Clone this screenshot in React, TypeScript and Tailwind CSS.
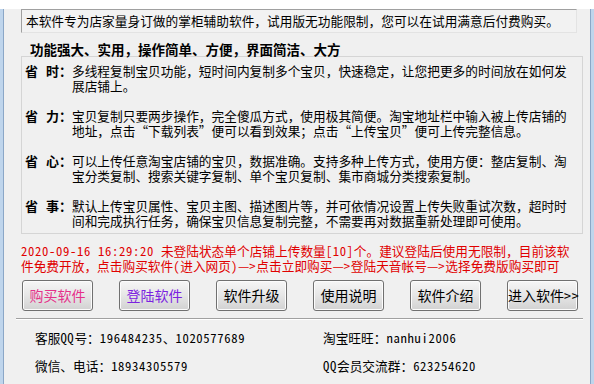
import React from "react";

const FONT = { fontFamily: '"Noto Sans CJK SC", "Noto Sans", sans-serif' };

type Feature = { label: string; lines: string[] };

const FEATURES: Feature[] = [
  {
    label: "时",
    lines: [
      "多线程复制宝贝功能，短时间内复制多个宝贝，快速稳定，让您把更多的时间放在如何发",
      "展店铺上。",
    ],
  },
  {
    label: "力",
    lines: [
      "宝贝复制只要两步操作，完全傻瓜方式，使用极其简便。淘宝地址栏中输入被上传店铺的",
      "地址，点击“下载列表”便可以看到效果；点击“上传宝贝”便可上传完整信息。",
    ],
  },
  {
    label: "心",
    lines: [
      "可以上传任意淘宝店铺的宝贝，数据准确。支持多种上传方式，使用方便：整店复制、淘",
      "宝分类复制、搜索关键字复制、单个宝贝复制、集市商城分类搜索复制。",
    ],
  },
  {
    label: "事",
    lines: [
      "默认上传宝贝属性、宝贝主图、描述图片等，并可依情况设置上传失败重试次数，超时时",
      "间和完成执行任务，确保宝贝信息复制完整，不需要再对数据重新处理即可使用。",
    ],
  },
];

const BUTTONS = [
  { text: "购买软件", color: "text-[#e5318a]" },
  { text: "登陆软件", color: "text-[#7b22e0]" },
  { text: "软件升级", color: "text-black" },
  { text: "使用说明", color: "text-black" },
  { text: "软件介绍", color: "text-black" },
  { text: "进入软件>>", color: "text-black" },
];

// half-width ascii runs, like the old SimSun look
function Mixed({ text }: { text: string }) {
  const parts = text.split(/([\x20-\x7e]+)/);
  return (
    <>
      {parts.map((p, i) =>
        /^[\x20-\x7e]+$/.test(p) ? (
          <span key={i} className="[font-feature-settings:'hwid'] tracking-[0.65px]">
            {p}
          </span>
        ) : (
          <React.Fragment key={i}>{p}</React.Fragment>
        )
      )}
    </>
  );
}

function FeatureRow({ f }: { f: Feature }) {
  return (
    <div className="flex">
      <div className="flex w-[47px] shrink-0 text-[13px] font-bold leading-[14.5px]">
        <span className="w-[21px]">省</span>
        <span>{f.label}：</span>
      </div>
      <div className="text-[12.7px] leading-[14.5px]">
        {f.lines.map((l, i) => (
          <div key={i} className="whitespace-nowrap">
            {l}
          </div>
        ))}
      </div>
    </div>
  );
}

export default function App() {
  return (
    <div
      className="w-[594px] h-[384px] bg-[#bfd5ec] pl-[3px] pr-[3px] pb-[2px] text-black"
      style={FONT}
    >
      <div className="h-full border-l border-r border-b border-[#8ba7c7] bg-[#f0f0f0] pl-[17px]">
        {/* notice box */}
        <div className="mt-[9px] flex h-[24px] w-[556px] items-center border border-t-[#a0a0a0] border-l-[#a0a0a0] border-b-[#e3e3e3] border-r-[#e3e3e3] bg-[#f2f2f2] pl-[4px] text-[12.7px] whitespace-nowrap">
          本软件专为店家量身订做的掌柜辅助软件，试用版无功能限制，您可以在试用满意后付费购买。
        </div>

        {/* features */}
        <div className="mt-[9px] pl-[9px] text-[13.5px] font-bold leading-[14px] whitespace-nowrap">
          功能强大、实用，操作简单、方便，界面简洁、大方
        </div>
        <div className="h-[178px] w-[562px] border border-[#d5d5d5] pl-[3px] pt-[7px] flex flex-col gap-[16px]">
          {FEATURES.map((f) => (
            <FeatureRow key={f.label} f={f} />
          ))}
        </div>

        {/* status */}
        <div className="mt-[10px] text-[12.7px] leading-[14.5px] text-[#e00000] whitespace-nowrap">
          <div>
            <Mixed text="2020-09-16 16:29:20 " />
            未登陆状态单个店铺上传数量
            <Mixed text="[10]" />
            个。建议登陆后使用无限制，目前该软
          </div>
          <div>
            件免费开放，点击购买软件<Mixed text="(" />进入网页<Mixed text=")" />—<Mixed text=">" />点击立即购买—<Mixed text=">" />登陆天音帐号—<Mixed text=">" />选择免费版购买即可
          </div>
        </div>

        {/* buttons */}
        <div className="mt-[7px] flex w-[557px] justify-between pl-[1px]">
          {BUTTONS.map((b) => (
            <button
              key={b.text}
              className={`h-[31px] w-[71px] rounded-[3px] border border-[#707070] bg-gradient-to-b from-[#f6f6f6] via-[#e6e6e6] to-[#d2d2d2] text-[14px] whitespace-nowrap shadow-[inset_0_0_0_1px_#fcfcfc] ${b.color}`}
            >
              <Mixed text={b.text} />
            </button>
          ))}
        </div>

        {/* separator */}
        <div className="-ml-[5px] mt-[7px] w-[567px] border-t border-b border-t-[#a0a0a0] border-b-white" />

        {/* contact */}
        <div className="mt-[11px] grid grid-cols-[288px_1fr] gap-y-[14px] pl-[14px] text-[12.7px] leading-[14px] whitespace-nowrap">
          <div>
            <Mixed text="客服QQ号：196484235、1020577689" />
          </div>
          <div>
            <Mixed text="淘宝旺旺：nanhui2006" />
          </div>
          <div>
            <Mixed text="微信、电话：18934305579" />
          </div>
          <div>
            <Mixed text="QQ会员交流群：623254620" />
          </div>
        </div>
      </div>
    </div>
  );
}
